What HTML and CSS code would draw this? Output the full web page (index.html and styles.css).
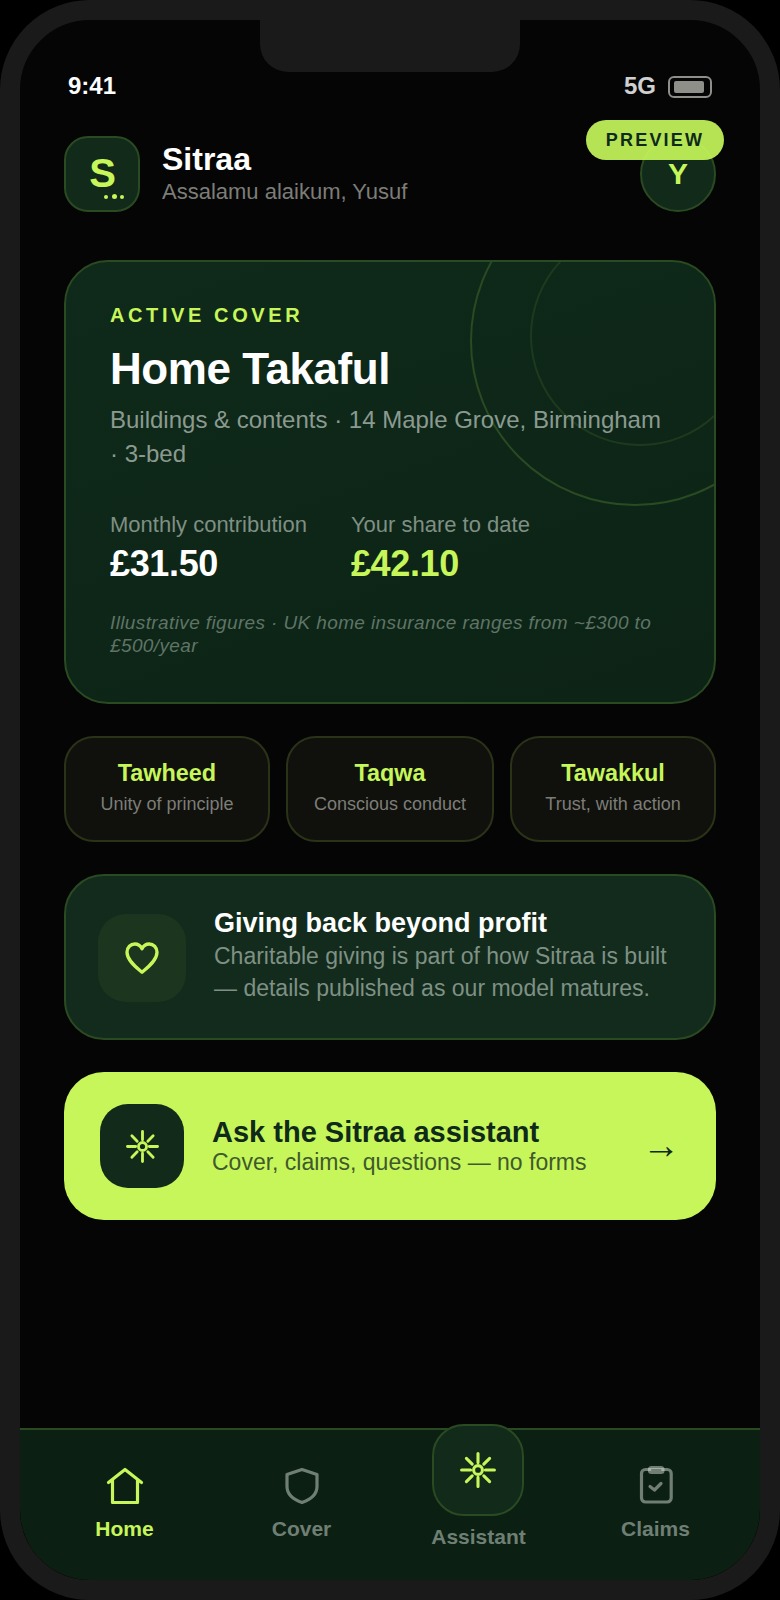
FILE: index.html
```html
<!DOCTYPE html>
<html lang="en">
<head>
<meta charset="utf-8">
<title>Sitraa</title>
<link rel="stylesheet" href="styles.css">
</head>
<body>
<svg class="defs" width="0" height="0" aria-hidden="true">
  <symbol id="spark" viewBox="0 0 36 36">
    <circle cx="18" cy="18" r="4.4"/>
    <path d="M18 1.6V10.6M18 25.4V34.4M1.6 18H10.6M25.4 18H34.4M6.4 6.4L12.2 12.2M23.8 23.8L29.6 29.6M6.4 29.6L12.2 23.8M23.8 12.2L29.6 6.4"/>
  </symbol>
</svg>
<div class="phone">
  <div class="notch"></div>
  <div class="preview">PREVIEW</div>
  <div class="screen">
    <div class="status">
      <span class="time">9:41</span>
      <div class="status-right">
        <span class="net">5G</span>
        <span class="battery"><span class="battery-fill"></span></span>
      </div>
    </div>
    <main class="main">
      <header class="header">
        <div class="logo">
          <span class="logo-s">S</span>
          <span class="logo-dots"><i></i><i class="dot-mid"></i><i></i></span>
        </div>
        <div class="brand">
          <div class="brand-name">Sitraa</div>
          <div class="brand-sub">Assalamu alaikum, Yusuf</div>
        </div>
        <div class="avatar">Y</div>
      </header>

      <section class="hero">
        <span class="ring ring-big"></span>
        <span class="ring ring-small"></span>
        <div class="eyebrow">ACTIVE COVER</div>
        <h1 class="hero-title">Home Takaful</h1>
        <p class="hero-desc">Buildings &amp; contents · 14 Maple Grove, Birmingham · 3-bed</p>
        <div class="stats">
          <div class="stat">
            <div class="stat-label">Monthly contribution</div>
            <div class="stat-value">£31.50</div>
          </div>
          <div class="stat">
            <div class="stat-label">Your share to date</div>
            <div class="stat-value stat-lime">£42.10</div>
          </div>
        </div>
        <p class="hero-note">Illustrative figures · UK home insurance ranges from ~£300 to £500/year</p>
      </section>

      <section class="tiles">
        <div class="tile"><div class="tile-title">Tawheed</div><div class="tile-sub">Unity of principle</div></div>
        <div class="tile"><div class="tile-title">Taqwa</div><div class="tile-sub">Conscious conduct</div></div>
        <div class="tile"><div class="tile-title">Tawakkul</div><div class="tile-sub">Trust, with action</div></div>
      </section>

      <section class="giving">
        <div class="giving-icon">
          <svg class="heart" viewBox="0 0 24 24"><path d="M12 20.5C9 18 3 13.6 3 8.6C3 5.6 5.2 3.6 7.7 3.6C9.6 3.6 11.1 4.6 12 6.4C12.9 4.6 14.4 3.6 16.3 3.6C18.8 3.6 21 5.6 21 8.6C21 13.6 15 18 12 20.5Z"/></svg>
        </div>
        <div class="giving-text">
          <div class="giving-title">Giving back beyond profit</div>
          <p class="giving-desc">Charitable giving is part of how Sitraa is built — details published as our model matures.</p>
        </div>
      </section>

      <section class="cta">
        <div class="cta-icon"><svg class="spark spark-cta"><use href="#spark"/></svg></div>
        <div class="cta-text">
          <div class="cta-title">Ask the Sitraa assistant</div>
          <div class="cta-sub">Cover, claims, questions — no forms</div>
        </div>
        <span class="cta-arrow">→</span>
      </section>
    </main>

    <nav class="nav">
      <div class="nav-item nav-active">
        <svg class="nav-icon" viewBox="0 0 36 36"><path d="M1.5 14.5L18 1.5L34.5 14.5M5.5 11.5V34.5H30.5V11.5"/></svg>
        <span class="nav-label">Home</span>
      </div>
      <div class="nav-item">
        <svg class="nav-icon" viewBox="0 0 36 36"><path d="M18 1.5L33 6.5V18.5C33 26.5 26.5 31.5 18 34.5C9.5 31.5 3 26.5 3 18.5V6.5Z"/></svg>
        <span class="nav-label">Cover</span>
      </div>
      <div class="nav-item nav-center">
        <div class="nav-bubble"><svg class="spark spark-nav"><use href="#spark"/></svg></div>
        <span class="nav-label">Assistant</span>
      </div>
      <div class="nav-item">
        <svg class="nav-icon nav-icon-layered" viewBox="0 0 36 36">
          <rect x="3.5" y="1.5" width="29.7" height="32.5" rx="4"/>
          <rect x="11.5" y="-0.5" width="13.5" height="5" rx="2"/>
          <path d="M12 18.5L16.5 22L23 15.5"/>
        </svg>
        <span class="nav-label">Claims</span>
      </div>
    </nav>
  </div>
</div>
</body>
</html>
```
FILE: styles.css
```css
* { box-sizing: border-box; }
html, body { margin: 0; padding: 0; background: #000; }
body { font-family: "Liberation Sans", Arial, sans-serif; }
p, h1 { margin: 0; }
.defs { position: absolute; }

.phone {
  position: relative;
  width: 780px;
  height: 1600px;
  border: 20px solid #1a1a1a;
  border-radius: 90px;
  background: #050505;
  overflow: hidden;
}
.notch {
  position: absolute;
  top: 0;
  left: 240px;
  width: 260px;
  height: 52px;
  background: #1a1a1a;
  border-radius: 0 0 28px 28px;
}
.preview {
  position: absolute;
  top: 100px;
  left: 566px;
  width: 138px;
  height: 40px;
  border-radius: 20px;
  background: rgba(198, 246, 90, 0.92);
  color: #0f2a1a;
  font-size: 18px;
  font-weight: 700;
  letter-spacing: 2.2px;
  line-height: 40px;
  text-align: center;
  z-index: 2;
}
.screen {
  display: flex;
  flex-direction: column;
  height: 1560px;
  border-radius: 70px;
  overflow: hidden;
}

.status {
  display: flex;
  justify-content: space-between;
  align-items: center;
  height: 28px;
  margin-top: 52px;
  padding: 0 48px;
}
.time { color: #fff; font-size: 24px; font-weight: 700; }
.status-right { display: flex; align-items: center; gap: 12px; }
.net { color: #d0d0d0; font-size: 24px; font-weight: 700; }
.battery {
  display: block;
  width: 44px;
  height: 22px;
  margin-top: 1px;
  padding: 3px 6px 3px 4px;
  border: 2px solid #8f8f8a;
  border-radius: 6px;
}
.battery-fill { display: block; height: 100%; background: #8f8f8a; border-radius: 2px; }

.main {
  flex: 1;
  display: flex;
  flex-direction: column;
  padding: 36px 44px 0;
}

.header { display: flex; align-items: center; height: 76px; }
.logo {
  position: relative;
  width: 76px;
  height: 76px;
  background: #112a1a;
  border: 2px solid #2a4a22;
  border-radius: 24px;
  display: flex;
  align-items: center;
  justify-content: center;
}
.logo-s { color: #c6f65a; font-size: 40px; font-weight: 700; line-height: 1; margin-top: -3px; margin-left: 1px; }
.logo-dots { position: absolute; right: 14px; bottom: 11px; display: flex; align-items: center; gap: 3.5px; }
.logo-dots i { width: 4px; height: 4px; border-radius: 50%; background: #c6f65a; }
.logo-dots .dot-mid { width: 5px; height: 5px; }
.brand { flex: 1; margin-left: 22px; }
.brand-name { color: #fff; font-size: 32px; font-weight: 700; line-height: 38px; margin-top: -4px; }
.brand-sub { color: #7d7d78; font-size: 22px; line-height: 27px; }
.avatar {
  width: 76px;
  height: 76px;
  border-radius: 50%;
  background: #112a1a;
  border: 2px solid #2a4a22;
  color: #c6f65a;
  font-size: 30px;
  font-weight: 700;
  display: flex;
  align-items: center;
  justify-content: center;
}

.hero {
  position: relative;
  margin-top: 48px;
  height: 444px;
  padding: 40px 44px 0;
  border: 2px solid #2a4a22;
  border-radius: 44px;
  background: linear-gradient(160deg, #0f2a1a, #0c2315);
  overflow: hidden;
}
.ring { position: absolute; border-radius: 50%; border-style: solid; border-width: 2px; }
.ring-big { width: 330px; height: 330px; top: -86px; right: -86px; border-color: #2a4a22; }
.ring-small { width: 220px; height: 220px; top: -36px; right: -36px; border-color: #1e3a1e; }
.eyebrow { position: relative; color: #c6f65a; font-size: 20px; font-weight: 700; letter-spacing: 3.6px; line-height: 26px; }
.hero-title { position: relative; color: #fff; font-size: 44px; font-weight: 700; letter-spacing: -0.44px; line-height: 54px; margin-top: 14px; }
.hero-desc { position: relative; color: #8b9a90; font-size: 24px; line-height: 33.6px; margin-top: 7px; }
.stats { position: relative; display: flex; gap: 44px; margin-top: 40px; }
.stat-label { color: #7f8f84; font-size: 22px; line-height: 30px; }
.stat-value { color: #fff; font-size: 36px; font-weight: 700; line-height: 46px; letter-spacing: -0.36px; margin-top: 1px; }
.stat-lime { color: #c6f65a; }
.hero-note { position: relative; color: #5f7466; font-size: 19px; font-style: italic; line-height: 22.4px; letter-spacing: 0.38px; margin-top: 25px; }

.tiles {
  display: grid;
  grid-template-columns: repeat(3, 1fr);
  gap: 16px;
  margin-top: 32px;
}
.tile {
  height: 106px;
  padding: 20px 26px 0;
  background: #10110c;
  border: 2px solid #2a3318;
  border-radius: 30px;
  text-align: center;
  white-space: nowrap;
}
.tile-title { color: #c6f65a; font-size: 23.4px; font-weight: 700; line-height: 30px; }
.tile-sub { color: #7d7d78; font-size: 18px; line-height: 26px; margin-top: 3px; }

.giving {
  display: flex;
  align-items: center;
  gap: 28px;
  height: 166px;
  margin-top: 32px;
  padding: 0 32px;
  background: #122b1c;
  border: 2px solid #2a4a22;
  border-radius: 40px;
}
.giving-icon {
  flex: none;
  width: 88px;
  height: 88px;
  margin-top: 2px;
  border-radius: 28px;
  background: #1c351f;
  display: flex;
  align-items: center;
  justify-content: center;
}
.heart { width: 40px; height: 40px; fill: none; stroke: #c6f65a; stroke-width: 2; stroke-linejoin: round; }
.giving-text { padding-bottom: 4px; }
.giving-title { color: #fff; font-size: 27px; font-weight: 700; line-height: 34px; }
.giving-desc { color: #7f9084; font-size: 23px; line-height: 32px; }

.cta {
  display: flex;
  align-items: center;
  height: 148px;
  margin-top: 32px;
  padding: 0 36px;
  background: #c6f65a;
  border-radius: 40px;
}
.cta-icon {
  flex: none;
  width: 84px;
  height: 84px;
  border-radius: 28px;
  background: #112a1a;
  display: flex;
  align-items: center;
  justify-content: center;
}
.cta-text { flex: 1; margin-left: 28px; padding-bottom: 2px; }
.cta-title { color: #0f2a1a; font-size: 29px; font-weight: 700; line-height: 34px; }
.cta-sub { color: #3f5a2c; font-size: 23px; line-height: 27px; }
.cta-arrow { color: #0f2a1a; font-size: 38px; line-height: 44px; padding-bottom: 2px; }

.spark { fill: none; stroke: #c6f65a; stroke-width: 3.1; stroke-linecap: round; }
.spark-cta { width: 33px; height: 33px; }
.spark-nav { width: 36px; height: 36px; }

.nav {
  display: flex;
  align-items: flex-start;
  height: 152px;
  padding: 38px 16px 0;
  background: #0b1f13;
  border-top: 2px solid #2a4a22;
}
.nav-item {
  flex: 1;
  display: flex;
  flex-direction: column;
  align-items: center;
  gap: 12px;
}
.nav-center { margin-top: -44px; gap: 8px; }
.nav-icon { width: 36px; height: 36px; overflow: visible; fill: none; stroke: #6f7f74; stroke-width: 3.2; stroke-linecap: round; stroke-linejoin: round; }
.nav-active .nav-icon { stroke: #c6f65a; }
.nav-icon-layered { stroke: #dfe6df; stroke-opacity: 0.48; }
.nav-bubble {
  width: 92px;
  height: 92px;
  margin-right: 2px;
  border-radius: 32px;
  background: #112a1a;
  border: 2px solid #2a4a22;
  display: flex;
  align-items: center;
  justify-content: center;
}
.nav-label { color: #6f7f74; font-size: 21px; font-weight: 700; line-height: 26px; }
.nav-active .nav-label { color: #c6f65a; }
```
